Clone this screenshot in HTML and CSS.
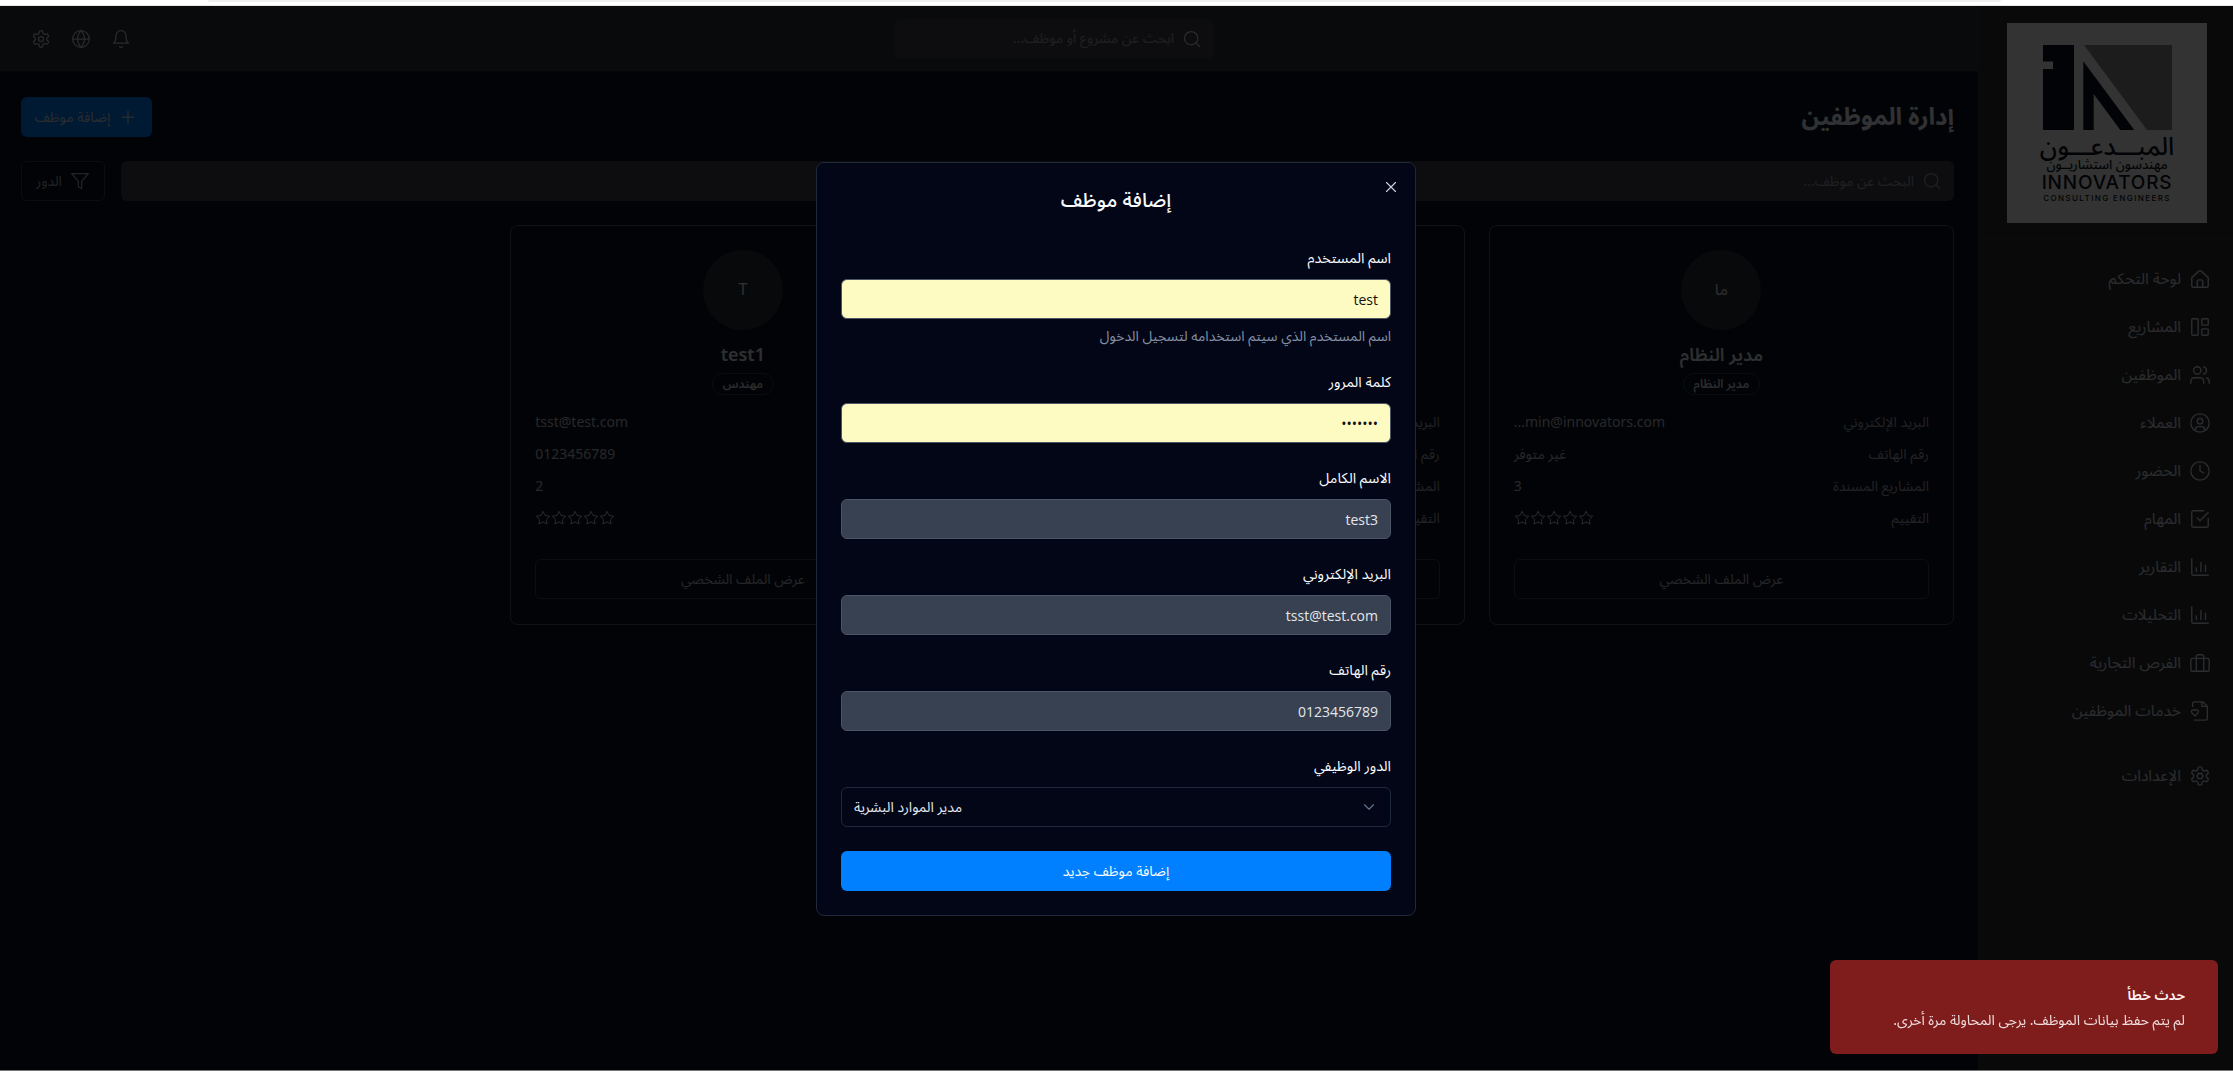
FILE: index.html
```html
<!DOCTYPE html>
<html lang="ar" dir="rtl">
<head>
<meta charset="utf-8">
<title>إدارة الموظفين</title>
<link rel="stylesheet" href="styles.css">
</head>
<body>
<svg class="defs" width="0" height="0">
  <symbol id="star" viewBox="0 0 24 24"><path d="M12 2l3.100 6.300 6.900 1-5 4.900 1.200 6.900-6.200-3.300-6.200 3.300L7 14.200 2 9.300l6.900-1z"/></symbol>
</svg>
<div class="browser-strip"><span class="strip-pill"></span></div>
<div class="app">
  <aside class="sidebar">
    <div class="logo-wrap">
      <div class="logo">
        <svg class="logo-mark" viewBox="0 0 129 85">
          <path class="mark-dark" d="M0 0H31V85H0V24H10V16.500H0Z"/>
          <path class="mark-dark" d="M40.300 16.300L91.300 85H77.300L50.700 49V85H40.300Z"/>
          <path class="mark-grey" d="M41 0H129V85H104Z"/>
        </svg>
        <div class="logo-ar-big">المبـــدعـــون</div>
        <div class="logo-ar">مهندسون استشاريــون</div>
        <div class="logo-en">INNOVATORS</div>
        <div class="logo-sub">CONSULTING ENGINEERS</div>
      </div>
    </div>
    <nav class="side-nav">
      <a class="side-link"><svg class="icon" viewBox="0 0 24 24"><path d="M3 10.500 10.700 3.500a2 2 0 0 1 2.600 0L21 10.500V19a2 2 0 0 1-2 2H5a2 2 0 0 1-2-2z"/><path d="M9 21v-6a2 2 0 0 1 2-2h2a2 2 0 0 1 2 2v6"/></svg>لوحة التحكم</a>
      <a class="side-link"><svg class="icon" viewBox="0 0 24 24"><rect x="3" y="3" width="7" height="18" rx="1"/><rect x="14" y="3" width="7" height="7" rx="1"/><rect x="14" y="14" width="7" height="7" rx="1"/></svg>المشاريع</a>
      <a class="side-link"><svg class="icon" viewBox="0 0 24 24"><circle cx="9" cy="7" r="4"/><path d="M2 21v-2a4 4 0 0 1 4-4h6a4 4 0 0 1 4 4v2"/><path d="M16 3.100a4 4 0 0 1 0 7.800"/><path d="M22 21v-2a4 4 0 0 0-3-3.900"/></svg>الموظفين</a>
      <a class="side-link"><svg class="icon" viewBox="0 0 24 24"><circle cx="12" cy="12" r="10"/><circle cx="12" cy="10" r="3"/><path d="M7 19.700V19a3 3 0 0 1 3-3h4a3 3 0 0 1 3 3v.7"/></svg>العملاء</a>
      <a class="side-link"><svg class="icon" viewBox="0 0 24 24"><circle cx="12" cy="12" r="10"/><path d="M12 6v6l4 2"/></svg>الحضور</a>
      <a class="side-link"><svg class="icon" viewBox="0 0 24 24"><path d="M21 11.500V19a2 2 0 0 1-2 2H5a2 2 0 0 1-2-2V5a2 2 0 0 1 2-2h11"/><path d="m9 11 3 3L21 5"/></svg>المهام</a>
      <a class="side-link"><svg class="icon" viewBox="0 0 24 24"><path d="M3 3v16a2 2 0 0 0 2 2h16"/><path d="M8 17v-4M13 17V7M18 17v-7"/></svg>التقارير</a>
      <a class="side-link"><svg class="icon" viewBox="0 0 24 24"><path d="M3 3v16a2 2 0 0 0 2 2h16"/><path d="M8 17v-4M13 17V7M18 17v-7"/></svg>التحليلات</a>
      <a class="side-link"><svg class="icon" viewBox="0 0 24 24"><rect x="2" y="7" width="20" height="14" rx="2"/><path d="M16 21V5a2 2 0 0 0-2-2h-4a2 2 0 0 0-2 2v16"/></svg>الفرص التجارية</a>
      <a class="side-link"><svg class="icon" viewBox="0 0 24 24"><path d="M4 7V4a2 2 0 0 1 2-2h9l5 5v13a2 2 0 0 1-2 2H6"/><path d="M14 2v5h6"/><path d="M6.500 17.500 3.300 14.300a2.100 2.100 0 0 1 3-3l.2.2.2-.2a2.100 2.100 0 0 1 3 3z"/></svg>خدمات الموظفين</a>
      <div class="side-divider"></div>
      <a class="side-link"><svg class="icon" viewBox="0 0 24 24"><path d="M12.200 2h-.4a2 2 0 0 0-2 2v.2a2 2 0 0 1-1 1.700l-.4.3a2 2 0 0 1-2 0l-.2-.1a2 2 0 0 0-2.700.7l-.2.400a2 2 0 0 0 .7 2.700l.2.100a2 2 0 0 1 1 1.700v.5a2 2 0 0 1-1 1.700l-.2.100a2 2 0 0 0-.7 2.700l.2.400a2 2 0 0 0 2.700.7l.2-.1a2 2 0 0 1 2 0l.4.3a2 2 0 0 1 1 1.700v.2a2 2 0 0 0 2 2h.4a2 2 0 0 0 2-2v-.2a2 2 0 0 1 1-1.700l.4-.3a2 2 0 0 1 2 0l.2.100a2 2 0 0 0 2.700-.7l.2-.4a2 2 0 0 0-.7-2.700l-.2-.1a2 2 0 0 1-1-1.700v-.5a2 2 0 0 1 1-1.700l.2-.1a2 2 0 0 0 .7-2.700l-.2-.4a2 2 0 0 0-2.700-.7l-.2.100a2 2 0 0 1-2 0l-.4-.3a2 2 0 0 1-1-1.700V4a2 2 0 0 0-2-2z"/><circle cx="12" cy="12" r="3"/></svg>الإعدادات</a>
    </nav>
  </aside>

  <div class="main-col">
    <header class="topbar">
      <div class="top-search">
        <svg class="icon" viewBox="0 0 24 24"><circle cx="11" cy="11" r="8"/><path d="m21 21-4.300-4.300"/></svg>
        <span>ابحث عن مشروع أو موظف...</span>
      </div>
      <div class="top-icons">
        <svg class="icon" viewBox="0 0 24 24"><path d="M6 8a6 6 0 0 1 12 0c0 7 3 9 3 9H3s3-2 3-9"/><path d="M10.300 21a1.900 1.900 0 0 0 3.400 0"/></svg>
        <svg class="icon" viewBox="0 0 24 24"><circle cx="12" cy="12" r="10"/><path d="M12 2a14.500 14.500 0 0 0 0 20 14.500 14.500 0 0 0 0-20"/><path d="M2 12h20"/></svg>
        <svg class="icon" viewBox="0 0 24 24"><path d="M12.200 2h-.4a2 2 0 0 0-2 2v.2a2 2 0 0 1-1 1.700l-.4.3a2 2 0 0 1-2 0l-.2-.1a2 2 0 0 0-2.700.7l-.2.400a2 2 0 0 0 .7 2.700l.2.100a2 2 0 0 1 1 1.700v.5a2 2 0 0 1-1 1.700l-.2.100a2 2 0 0 0-.7 2.700l.2.400a2 2 0 0 0 2.700.7l.2-.1a2 2 0 0 1 2 0l.4.3a2 2 0 0 1 1 1.700v.2a2 2 0 0 0 2 2h.4a2 2 0 0 0 2-2v-.2a2 2 0 0 1 1-1.700l.4-.3a2 2 0 0 1 2 0l.2.100a2 2 0 0 0 2.700-.7l.2-.4a2 2 0 0 0-.7-2.700l-.2-.1a2 2 0 0 1-1-1.700v-.5a2 2 0 0 1 1-1.700l.2-.1a2 2 0 0 0 .7-2.700l-.2-.4a2 2 0 0 0-2.700-.7l-.2.100a2 2 0 0 1-2 0l-.4-.3a2 2 0 0 1-1-1.700V4a2 2 0 0 0-2-2z"/><circle cx="12" cy="12" r="3"/></svg>
      </div>
    </header>

    <main class="content">
      <div class="page-head">
        <h1>إدارة الموظفين</h1>
        <button class="add-btn"><svg class="icon" viewBox="0 0 24 24"><path d="M5 12h14M12 5v14"/></svg>إضافة موظف</button>
      </div>
      <div class="filter-row">
        <div class="page-search">
          <svg class="icon" viewBox="0 0 24 24"><circle cx="11" cy="11" r="8"/><path d="m21 21-4.300-4.300"/></svg>
          <span>البحث عن موظف...</span>
        </div>
        <button class="filter-btn"><svg class="icon" viewBox="0 0 24 24"><path d="M22 3H2l8 9.500V19l4 2v-8.500z"/></svg>الدور</button>
      </div>
      <div class="cards">
        <article class="card">
          <div class="avatar">ما</div>
          <h3>مدير النظام</h3>
          <span class="badge">مدير النظام</span>
          <dl class="facts">
            <div class="fact"><dt>البريد الإلكتروني</dt><dd class="ltr">...min@innovators.com</dd></div>
            <div class="fact"><dt>رقم الهاتف</dt><dd>غير متوفر</dd></div>
            <div class="fact"><dt>المشاريع المسندة</dt><dd>3</dd></div>
            <div class="fact"><dt>التقييم</dt><dd class="stars"><svg class="star"><use href="#star"/></svg><svg class="star"><use href="#star"/></svg><svg class="star"><use href="#star"/></svg><svg class="star"><use href="#star"/></svg><svg class="star"><use href="#star"/></svg></dd></div>
          </dl>
          <button class="profile-btn">عرض الملف الشخصي</button>
        </article>
        <article class="card">
          <div class="avatar">A</div>
          <h3>Ahmed</h3>
          <span class="badge">مدير</span>
          <dl class="facts">
            <div class="fact"><dt>البريد الإلكتروني</dt><dd class="ltr">a@test.com</dd></div>
            <div class="fact"><dt>رقم الهاتف</dt><dd>0123456789</dd></div>
            <div class="fact"><dt>المشاريع المسندة</dt><dd>1</dd></div>
            <div class="fact"><dt>التقييم</dt><dd class="stars"><svg class="star"><use href="#star"/></svg><svg class="star"><use href="#star"/></svg><svg class="star"><use href="#star"/></svg><svg class="star"><use href="#star"/></svg><svg class="star"><use href="#star"/></svg></dd></div>
          </dl>
          <button class="profile-btn">عرض الملف الشخصي</button>
        </article>
        <article class="card">
          <div class="avatar">T</div>
          <h3>test1</h3>
          <span class="badge">مهندس</span>
          <dl class="facts">
            <div class="fact"><dt>البريد الإلكتروني</dt><dd class="ltr">tsst@test.com</dd></div>
            <div class="fact"><dt>رقم الهاتف</dt><dd>0123456789</dd></div>
            <div class="fact"><dt>المشاريع المسندة</dt><dd>2</dd></div>
            <div class="fact"><dt>التقييم</dt><dd class="stars"><svg class="star"><use href="#star"/></svg><svg class="star"><use href="#star"/></svg><svg class="star"><use href="#star"/></svg><svg class="star"><use href="#star"/></svg><svg class="star"><use href="#star"/></svg></dd></div>
          </dl>
          <button class="profile-btn">عرض الملف الشخصي</button>
        </article>
      </div>
    </main>
  </div>
</div>
<div class="bottom-line"></div>

<div class="overlay"></div>

<div class="modal">
  <button class="modal-close"><svg class="icon" viewBox="0 0 24 24"><path d="M18 6 6 18M6 6l12 12"/></svg></button>
  <h2>إضافة موظف</h2>
  <form class="form">
    <div class="field">
      <label>اسم المستخدم</label>
      <div class="input filled">test</div>
      <p class="hint">اسم المستخدم الذي سيتم استخدامه لتسجيل الدخول</p>
    </div>
    <div class="field">
      <label>كلمة المرور</label>
      <div class="input filled dots">•••••••</div>
    </div>
    <div class="field">
      <label>الاسم الكامل</label>
      <div class="input">test3</div>
    </div>
    <div class="field">
      <label>البريد الإلكتروني</label>
      <div class="input">tsst@test.com</div>
    </div>
    <div class="field">
      <label>رقم الهاتف</label>
      <div class="input">0123456789</div>
    </div>
    <div class="field">
      <label>الدور الوظيفي</label>
      <div class="select"><span>مدير الموارد البشرية</span><svg class="icon" viewBox="0 0 24 24"><path d="m6 9 6 6 6-6"/></svg></div>
    </div>
    <button class="submit" type="button">إضافة موظف جديد</button>
  </form>
</div>

<div class="toast">
  <div class="toast-title">حدث خطأ</div>
  <div class="toast-text">لم يتم حفظ بيانات الموظف. يرجى المحاولة مرة أخرى.</div>
</div>
</body>
</html>
```

FILE: styles.css
```css
* {
	box-sizing: border-box;
}
html, body {
	height: 100%;
}
body {
	margin: 0;
	background: #0b0f1e;
	color: #e2e8f0;
	font-family: "Noto Sans Arabic", "Ubuntu", "Open Sans", "Noto Sans", "DejaVu Sans", sans-serif;
	font-size: 14px;
	overflow: hidden;
}
.defs {
	position: absolute;
}
.icon {
	width: 20px;
	height: 20px;
	fill: none;
	stroke: currentColor;
	stroke-width: 1.5;
	stroke-linecap: round;
	stroke-linejoin: round;
	flex: none;
}
button {
	font: inherit;
	color: inherit;
}

.browser-strip {
	height: 6px;
	background: #fff;
	border-bottom: 1px solid #e8e8e8;
	position: relative;
	z-index: 5;
}
.strip-pill {
	position: absolute;
	left: 208px;
	right: 232px;
	top: 0;
	height: 2px;
	background: #f0f0f0;
	border-radius: 0 0 4px 4px;
}
.bottom-line {
	height: 1px;
	background: #777;
	position: relative;
	z-index: 5;
}

.app {
	display: flex;
	height: 1064px;
}
.sidebar {
	width: 255px;
	background: #2d3036;
	border-left: 1px solid #343840;
	flex: none;
}
.logo-wrap {
	padding: 17px 26px 16px 28px;
	border-bottom: 1px solid #343840;
}
.logo {
	width: 200px;
	height: 200px;
	background: #fff;
	color: #0b1220;
	display: flex;
	flex-direction: column;
	align-items: center;
	padding-top: 22px;
}
.logo-mark {
	width: 129px;
	height: 85px;
	display: block;
	flex: none;
}
.mark-dark {
	fill: #0b1220;
}
.mark-grey {
	fill: #8c8c8c;
}
.logo-ar-big {
	font-size: 25px;
	font-weight: 500;
	line-height: 24px;
	margin-top: 5px;
	white-space: nowrap;
}
.logo-ar {
	font-size: 13px;
	font-weight: 500;
	line-height: 12px;
	white-space: nowrap;
}
.logo-en {
	font-family: "Inter", sans-serif;
	font-size: 19px;
	font-weight: 500;
	line-height: 20px;
	letter-spacing: .8px;
	margin-top: 2px;
}
.logo-sub {
	font-family: "Inter", sans-serif;
	font-size: 8px;
	font-weight: 500;
	line-height: 10px;
	letter-spacing: 1.4px;
}
.side-nav {
	padding: 15px 22px 0 8px;
	display: flex;
	flex-direction: column;
}
.side-link {
	display: flex;
	align-items: center;
	gap: 8px;
	height: 48px;
	color: #d8dce2;
	font-size: 15.6px;
}
.side-link .icon {
	width: 22px;
	height: 22px;
}
.side-divider {
	height: 1px;
	background: #343840;
	margin: 2px -16px 14px 0;
}

.main-col {
	flex: 1;
	min-width: 0;
	display: flex;
	flex-direction: column;
}
.topbar {
	height: 66px;
	background: #31343a;
	border-bottom: 1px solid #1d222f;
	display: flex;
	align-items: center;
	justify-content: center;
	position: relative;
	flex: none;
}
.top-search {
	width: 320px;
	height: 40px;
	margin-left: 130px;
	background: #41444c;
	border-radius: 8px;
	display: flex;
	align-items: center;
	gap: 8px;
	padding: 0 12px;
	color: #9aa0aa;
}
.top-search .icon {
	width: 20px;
	height: 20px;
	color: #cfd3da;
}
.top-icons {
	position: absolute;
	left: 31px;
	top: 0;
	height: 100%;
	display: flex;
	align-items: center;
	gap: 20px;
	color: #cfd3da;
}
.top-icons .icon {
	width: 20px;
	height: 20px;
}
.content {
	flex: 1;
	padding: 25px 24px 0 21px;
}
.page-head {
	display: flex;
	justify-content: space-between;
	align-items: center;
	height: 40px;
}
.page-head h1 {
	margin: 0;
	font-size: 24px;
	font-weight: 700;
	color: #f1f5f9;
}
.add-btn {
	height: 40px;
	width: 131px;
	border: 0;
	border-radius: 6px;
	background: #0080ff;
	display: flex;
	align-items: center;
	justify-content: center;
	gap: 8px;
	color: #d5dbe4;
}
.filter-row {
	display: flex;
	gap: 16px;
	margin-top: 24px;
}
.page-search {
	flex: 1;
	height: 40px;
	background: #41444c;
	border-radius: 6px;
	display: flex;
	align-items: center;
	gap: 8px;
	padding: 0 12px;
	color: #9aa0aa;
}
.filter-btn {
	width: 84px;
	height: 40px;
	border: 1px solid #3a3f4a;
	border-radius: 6px;
	background: transparent;
	display: flex;
	align-items: center;
	justify-content: center;
	gap: 8px;
	color: #a8adb6;
}
.cards {
	display: grid;
	grid-template-columns: repeat(4, 1fr);
	gap: 24px;
	margin-top: 24px;
}
.card {
	height: 400px;
	border: 1px solid #565b66;
	border-radius: 8px;
	padding: 24px;
	display: flex;
	flex-direction: column;
	align-items: center;
}
.avatar {
	width: 80px;
	height: 80px;
	border-radius: 50%;
	background: #2c3036;
	display: flex;
	align-items: center;
	justify-content: center;
	font-size: 16px;
	flex: none;
}
.card h3 {
	margin: 12px 0 0;
	font-size: 18px;
	line-height: 26px;
	font-weight: 600;
}
.badge {
	margin-top: 5px;
	height: 22px;
	padding: 0 10px;
	border: 1px solid #3a3f4a;
	border-radius: 11px;
	font-size: 12px;
	font-weight: 600;
	display: flex;
	align-items: center;
	color: #d2d6dd;
}
.facts {
	width: 100%;
	margin: 11px 0 0;
}
.fact {
	display: flex;
	justify-content: space-between;
	align-items: center;
	height: 32px;
}
.fact dt {
	color: #a5abb6;
}
.fact dd {
	margin: 0;
	color: #bfc3cb;
}
.ltr {
	direction: ltr;
}
.stars {
	display: flex;
}
.star {
	width: 16px;
	height: 16px;
	fill: none;
	stroke: #cfd3da;
	stroke-width: 1.5;
	stroke-linejoin: round;
}
.profile-btn {
	width: 100%;
	height: 40px;
	margin-top: 25px;
	border: 1px solid #3e4350;
	border-radius: 6px;
	background: transparent;
	color: #b4b9c2;
}

.overlay {
	position: fixed;
	left: 0;
	right: 0;
	top: 6px;
	bottom: 1px;
	background: rgba(0, 0, 0, .8);
}
.modal {
	position: fixed;
	left: 816px;
	top: 162px;
	width: 600px;
	height: 754px;
	padding: 24px;
	background: #020617;
	border: 1px solid #1e293b;
	border-radius: 8px;
	color: #f8fafc;
}
.modal h2 {
	margin: 0 0 24px;
	height: 36px;
	font-size: 20px;
	line-height: 28px;
	font-weight: 500;
	text-align: center;
}
.modal-close {
	position: absolute;
	right: 15px;
	top: 15px;
	width: 18px;
	height: 18px;
	padding: 0;
	border: 0;
	background: none;
	color: #cbd5e1;
	display: flex;
}
.modal-close .icon {
	width: 18px;
	height: 18px;
}
.form {
	display: flex;
	flex-direction: column;
	gap: 24px;
}
.field label {
	display: block;
	height: 24px;
	line-height: 24px;
	margin-bottom: 8px;
	font-size: 14.4px;
	font-weight: 400;
}
.input {
	height: 40px;
	border: 1px solid #4b5563;
	border-radius: 6px;
	background: #374151;
	padding: 0 12px;
	display: flex;
	align-items: center;
	color: #e5e7eb;
	font-family: "Open Sans", sans-serif;
}
.input.filled {
	background: #fefbc2;
	color: #111;
}
.input.dots {
	letter-spacing: 0;
}
.hint {
	margin: 8px 0 0;
	line-height: 20px;
	color: #8490a3;
}
.select {
	height: 40px;
	border: 1px solid #1e293b;
	border-radius: 6px;
	padding: 0 12px;
	display: flex;
	flex-direction: row-reverse;
	justify-content: space-between;
	align-items: center;
	color: #e2e8f0;
}
.select .icon {
	width: 18px;
	height: 18px;
	color: #64748b;
}
.submit {
	height: 40px;
	border: 0;
	border-radius: 6px;
	background: #0080ff;
	color: #f8fafc;
}

.toast {
	position: fixed;
	left: 1830px;
	top: 960px;
	width: 388px;
	height: 94px;
	padding: 25px 33px 0 16px;
	background: #7f1d1d;
	border-radius: 6px;
	color: #fef2f2;
}
.toast-title {
	font-weight: 600;
	line-height: 22px;
}
.toast-text {
	margin-top: 3px;
	line-height: 22px;
	opacity: .9;
}
```
